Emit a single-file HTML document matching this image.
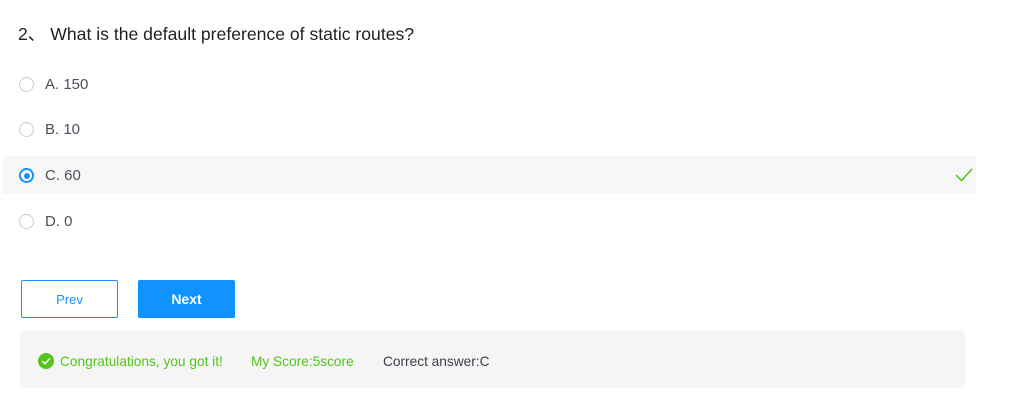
<!DOCTYPE html>
<html><head><meta charset="utf-8"><style>
body{margin:0;width:1012px;height:413px;background:#fff;font-family:"Liberation Sans",Arial,sans-serif;position:relative;overflow:hidden}
.a{position:absolute}
.q{left:18px;top:21px;font-size:17.6px;color:#1f1f1f}
.opt{left:3px;width:973px;height:38px;font-size:15px;color:#4a4f5a}
.opt .r{position:absolute;left:16px;top:12px;width:13px;height:13px;border:1px solid #c8cbd0;border-radius:50%;background:#fff}
.opt .t{position:absolute;left:42px;top:11px}
.sel{background:#f7f7f7}
.sel .r{border:2px solid #1890ff;width:11px;height:11px}
.sel .r:after{content:"";position:absolute;left:2.5px;top:2.5px;width:6px;height:6px;border-radius:50%;background:#1890ff}
.btn{top:280px;width:97px;height:38px;border-radius:2px;font-size:14px;text-align:center;line-height:38px;box-sizing:border-box}
</style></head><body>
<div class="a q">2<span style="font-family:'Noto Sans CJK SC',sans-serif">、</span>&nbsp;What is the default preference of static routes?</div>
<div class="a opt" style="top:65px"><span class="r"></span><span class="t">A. 150</span></div>
<div class="a opt" style="top:110px"><span class="r"></span><span class="t">B. 10</span></div>
<div class="a opt sel" style="top:156px"><span class="r"></span><span class="t">C. 60</span>
<svg style="position:absolute;left:951px;top:11px" width="20" height="16" viewBox="0 0 20 16"><path d="M2 8 L7.5 13.5 L18 2" fill="none" stroke="#52c41a" stroke-width="1.5"/></svg></div>
<div class="a opt" style="top:202px"><span class="r"></span><span class="t">D. 0</span></div>
<div class="a btn" style="left:21px;border:1px solid #1890ff;color:#1890ff;font-size:13px">Prev</div>
<div class="a btn" style="left:138px;background:#1193ff;color:#fff;font-weight:bold;font-size:14px">Next</div>
<div class="a" style="left:20px;top:331px;width:945px;height:57px;background:#f5f5f5;border-radius:3px;font-size:13.7px">
<svg style="position:absolute;left:18px;top:22px" width="16" height="16" viewBox="0 0 16 16"><circle cx="8" cy="8" r="8" fill="#52c41a"/><path d="M4.3 8.2 L7 10.8 L11.8 5.5" fill="none" stroke="#fff" stroke-width="1.6"/></svg>
<span style="position:absolute;left:40px;top:23px;color:#52c41a">Congratulations, you got it!</span>
<span style="position:absolute;left:231px;top:23px;color:#52c41a">My Score:5score</span>
<span style="position:absolute;left:363px;top:23px;color:#3a3f4a">Correct answer:C</span>
</div>
</body></html>
